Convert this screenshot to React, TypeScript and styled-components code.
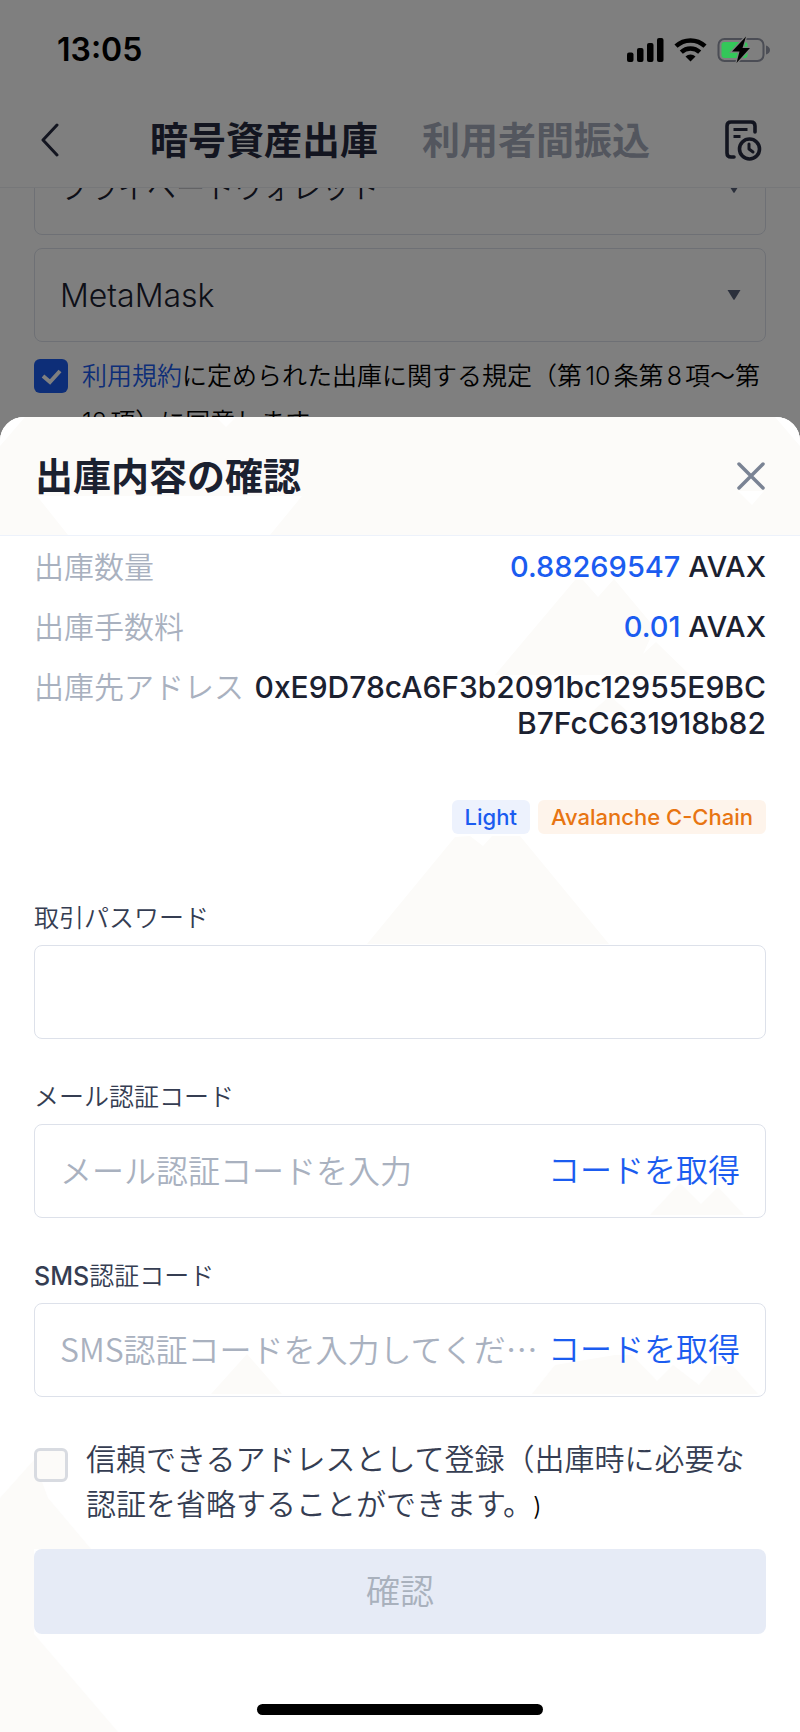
import React from "react";
import styled, { createGlobalStyle } from "styled-components";

const latinFirst = `Inter, "Noto Sans CJK JP", sans-serif`;
const cjkFirst = `"Noto Sans CJK JP", Inter, sans-serif`;

const color = {
  ink: "#1b2130",
  body: "#353d52",
  muted: "#a9b1bf",
  blue: "#1b5cf0",
  line: "#dde1ea",
  tint: "#fcfbf9",
};

const GlobalStyle = createGlobalStyle`
  *, *::before, *::after { box-sizing: border-box; }
  body { margin: 0; background: #fff; font-family: ${latinFirst}; font-weight: 350; color: ${color.ink}; }
  button, input, select { font: inherit; color: inherit; margin: 0; }
  button { border: 0; padding: 0; background: none; cursor: pointer; }
  h1, h2, p, dl, dd { margin: 0; }
  svg { display: block; }
`;

const Screen = styled.div`
  display: grid;
  grid-template-columns: minmax(0, 1fr);
  min-height: 100vh;
`;

const Underlay = styled.div`
  grid-area: 1 / 1;
  background: #fff;
`;

const NavBar = styled.header`
  position: relative;
  z-index: 1;
  display: grid;
  grid-template-columns: 1fr auto 1fr;
  align-items: end;
  height: 188px;
  padding: 0 32px 22px;
  background: #fff;
  border-bottom: 1px solid #eceef2;
`;

const IconButton = styled.button<{ $narrow?: boolean }>`
  display: grid;
  place-items: center;
  width: ${(p) => (p.$narrow ? 36 : 50)}px;
  height: 50px;

  &:last-child {
    justify-self: end;
  }
`;

const NavTabs = styled.nav`
  display: flex;
  gap: 44px;
`;

const NavTab = styled.button<{ $active?: boolean }>`
  font-size: 38px;
  line-height: 50px;
  font-weight: 700;
  white-space: nowrap;
  color: ${(p) => (p.$active ? "#262b40" : "#a6adbd")};
`;

const Scrolled = styled.div`
  display: flex;
  flex-direction: column;
  gap: 13px;
  margin-top: -47px;
  padding: 0 34px;
`;

const SelectBox = styled.div`
  display: grid;
  align-items: center;
  height: 94px;
  border: 1px solid ${color.line};
  border-radius: 8px;
`;

const Select = styled.select<{ $latin?: boolean }>`
  grid-area: 1 / 1;
  width: 100%;
  height: 100%;
  padding: 0 60px 0 25px;
  border: 0;
  background: transparent;
  appearance: none;
  font-size: ${(p) => (p.$latin ? 32 : 29)}px;
`;

const SelectArrow = styled.svg`
  grid-area: 1 / 1;
  justify-self: end;
  margin-right: 24px;
  pointer-events: none;
`;

const CheckRow = styled.div<{ $gap: number }>`
  display: flex;
  align-items: flex-start;
  gap: ${(p) => p.$gap}px;
`;

const CheckBox = styled.input`
  flex: none;
  width: 34px;
  height: 34px;
  margin: 0;
  appearance: none;
  border: 3px solid #d8dbe1;
  border-radius: 6px;
  background: ${color.tint};

  &:checked {
    border: 0;
    background: ${color.blue}
      url("data:image/svg+xml,%3Csvg xmlns='http://www.w3.org/2000/svg' viewBox='0 0 34 34'%3E%3Cpath d='M9 17l7 6 10-11' fill='none' stroke='white' stroke-width='4'/%3E%3C/svg%3E");
  }
`;

const TermsRow = styled(CheckRow)`
  margin-top: -2px;

  ${CheckBox} {
    margin-top: 6px;
  }
`;

const TermsText = styled.label`
  font-size: 25px;
  line-height: 46px;
  text-autospace: normal;
  color: #000;

  a {
    color: ${color.blue};
    text-decoration: none;
  }
`;

const Overlay = styled.div`
  position: relative;
  z-index: 2;
  grid-area: 1 / 1;
  display: flex;
  flex-direction: column;
  justify-content: space-between;
  background: rgba(0, 0, 0, 0.5);
`;

const StatusBar = styled.div`
  display: flex;
  align-items: center;
  justify-content: space-between;
  padding: 30px 30px 0 57px;
  color: #000;
`;

const Clock = styled.time`
  font-size: 32px;
  line-height: 40px;
  font-weight: 600;
`;

const Sheet = styled.section`
  position: relative;
  overflow: hidden;
  border-radius: 24px 24px 0 0;
  background: #fff;
`;

const Watermark = styled.svg`
  position: absolute;
  top: 0;
  left: 0;
  width: 100%;
  pointer-events: none;
`;

const SheetHeader = styled.header`
  position: relative;
  display: flex;
  align-items: center;
  justify-content: space-between;
  height: 119px;
  padding: 0 24px 0 35px;
  border-bottom: 1px solid #edf2fb;
`;

const SheetTitle = styled.h1`
  font-size: 38px;
  line-height: 50px;
  font-weight: 700;
`;

const SheetBody = styled.form`
  position: relative;
  display: flex;
  flex-direction: column;
  padding: 13px 34px 17px;
`;

const Details = styled.dl`
  display: flex;
  flex-direction: column;
  gap: 24px;
`;

const DetailRow = styled.div`
  display: flex;
  justify-content: space-between;
  gap: 8px;
  line-height: 36px;
`;

const DetailName = styled.dt`
  flex: none;
  font-size: 30px;
  color: ${color.muted};
`;

const DetailValue = styled.dd<{ $address?: boolean }>`
  font-size: ${(p) => (p.$address ? 30 : 29)}px;
  font-weight: 500;
  text-align: right;
  overflow-wrap: anywhere;
`;

const Amount = styled.span`
  color: ${color.blue};
`;

const Tags = styled.div`
  display: flex;
  justify-content: flex-end;
  gap: 8px;
  margin: 59px 0 26px;
`;

const Tag = styled.span<{ $tone: "blue" | "orange" }>`
  padding: 0 13px;
  border-radius: 6px;
  font-size: 22px;
  line-height: 34px;
  font-weight: 500;
  color: ${(p) => (p.$tone === "blue" ? color.blue : "#e87512")};
  background: ${(p) => (p.$tone === "blue" ? "#edf2fd" : "#fef4eb")};
`;

const Field = styled.div`
  display: flex;
  flex-direction: column;
  gap: 12px;
  margin-top: 43px;
`;

const FieldLabel = styled.label`
  font-size: 25px;
  line-height: 30px;
  color: ${color.body};
`;

const Strong = styled.span`
  font-weight: 500;
`;

const FieldBox = styled.div`
  display: flex;
  align-items: center;
  gap: 8px;
  height: 94px;
  padding: 0 25px;
  border: 1px solid ${color.line};
  border-radius: 8px;
`;

const Input = styled.input`
  flex: 1;
  min-width: 0;
  height: 60px;
  padding: 0 0 4px;
  border: 0;
  outline: 0;
  background: transparent;
  font-family: ${cjkFirst};
  font-size: 32px;

  &::placeholder {
    color: ${color.muted};
    opacity: 1;
  }
`;

const CodeButton = styled.button`
  flex: none;
  font-size: 32px;
  line-height: 48px;
  color: ${color.blue};
`;

const TrustRow = styled(CheckRow)`
  margin-top: 40px;

  ${CheckBox} {
    margin-top: 11px;
  }
`;

const TrustText = styled.label`
  font-size: 30px;
  line-height: 45px;
  text-spacing-trim: space-all;
  color: ${color.body};
`;

const ClosingMark = styled.span`
  font-size: 25px;
  color: #000;
`;

const SubmitButton = styled.button`
  height: 85px;
  margin-top: 20px;
  padding-bottom: 4px;
  border-radius: 8px;
  background: #e6ebf6;
  font-size: 34px;
  color: #a9b1bd;
`;

const HomeIndicator = styled.div`
  align-self: center;
  width: 286px;
  height: 11px;
  margin-top: 70px;
  border-radius: 6px;
  background: #000;
`;

const StatusIcons = () => (
  <svg width="144" height="28" viewBox="626 35 144 28" aria-label="電波・Wi-Fi・充電中" role="img">
    <g fill="#000">
      <rect x="627" y="51.500" width="6.500" height="9.500" rx="2" />
      <rect x="637" y="47" width="6.500" height="14" rx="2" />
      <rect x="647" y="42" width="6.500" height="19" rx="2" />
      <rect x="657" y="37" width="6.500" height="24" rx="2" />
      <path d="M690.500 60.500l-5-5a7.500 7.500 0 0 1 10 0z" />
    </g>
    <g fill="none" stroke="#000" strokeWidth="4.500">
      <path d="M676 45.200a21 21 0 0 1 29 0" />
      <path d="M681.300 51.200a13.500 13.500 0 0 1 18.400 0" />
    </g>
    <rect x="718.500" y="38" width="45" height="22" rx="6" fill="none" stroke="#4b4d55" strokeWidth="2" />
    <path d="M766 44.500q4 1.500 4 4.500t-4 4.500z" fill="#4b4d55" />
    <rect x="721.500" y="41" width="26" height="16" rx="3" fill="#34c759" />
    <path d="M746 35.500l-14 15h7.500l-3 11.500 13.500-15h-7.500z" fill="#000" stroke="#808080" strokeWidth="2.500" paintOrder="stroke" />
  </svg>
);

const BackIcon = () => (
  <svg width="18" height="34" viewBox="0 0 18 34" fill="none" stroke="#262b40" strokeWidth="3" strokeLinecap="round" strokeLinejoin="round">
    <path d="M16 2L2 17l14 15" />
  </svg>
);

const HistoryIcon = () => (
  <svg width="38" height="42" viewBox="723 119 38 42" fill="none" stroke="#262b40" strokeWidth="3.600" strokeLinecap="round" strokeLinejoin="round">
    <path d="M754 132v-6q0-4-4-4h-20q-4 0-4 4v27q0 4 4 4h3" />
    <path d="M732.500 129.500h14M732.500 136.500h7" strokeLinecap="butt" strokeWidth="3.200" />
    <circle cx="748.500" cy="149" r="10" />
    <path d="M748 144v5l4 3" strokeWidth="3" />
  </svg>
);

const CloseIcon = () => (
  <svg width="28" height="28" viewBox="0 0 28 28" stroke="#7a8394" strokeWidth="3.500" strokeLinecap="round">
    <path d="M2 2l24 24M26 2L2 26" />
  </svg>
);

const ArrowDown = () => (
  <SelectArrow width="14" height="10" viewBox="0 0 14 10" fill="#566079">
    <path d="M.5 0h13L7.800 9.200q-.8 1-1.600 0z" />
  </SelectArrow>
);

const Mountains = () => (
  <Watermark viewBox="0 417 800 1315" aria-hidden="true">
    <g fill={color.tint}>
      <path d="M0 417H800V535H0z" />
      <path d="M495 675L575 580h8l15 17 16-18 41 49-12 26 13-12 34 33z" />
      <path d="M592 712l18-16 18 16z" />
      <path d="M367 944l88-107 15-1 13 10 9-10h28l89 108z" />
      <path d="M650 1215l30-32 21 21 17-17 26 28z" />
      <path d="M211 1394l36-40 35 40z" />
      <path d="M532 1394l23-29 60-10 17 0 25 26 16-16 26 20 16-19h18l25 28z" />
      <path d="M0 1498l34-38 14 38 43 51H34v85l84 98H0z" />
    </g>
    <g fill="#fff">
      <path d="M37 496h265l-32 39H68z" />
      <path d="M0 417h25L0 446zM775 417h25v29z" />
      <path d="M216 417h20l-10 10z" />
      <path d="M738 491h26l-12 14z" />
    </g>
  </Watermark>
);

type CodeFieldProps = { id: string; label: React.ReactNode; placeholder: string };

const CodeField = ({ id, label, placeholder }: CodeFieldProps) => (
  <Field>
    <FieldLabel htmlFor={id}>{label}</FieldLabel>
    <FieldBox>
      <Input id={id} type="text" placeholder={placeholder} />
      <CodeButton type="button">コードを取得</CodeButton>
    </FieldBox>
  </Field>
);

export default function App() {
  return (
    <Screen lang="ja">
      <GlobalStyle />
      <Underlay>
        <NavBar>
          <IconButton $narrow aria-label="戻る">
            <BackIcon />
          </IconButton>
          <NavTabs>
            <NavTab $active>暗号資産出庫</NavTab>
            <NavTab>利用者間振込</NavTab>
          </NavTabs>
          <IconButton aria-label="履歴">
            <HistoryIcon />
          </IconButton>
        </NavBar>
        <Scrolled>
          <SelectBox>
            <Select aria-label="出庫先の種類">
              <option>プライベートウォレット</option>
            </Select>
            <ArrowDown />
          </SelectBox>
          <SelectBox>
            <Select $latin aria-label="ウォレット">
              <option>MetaMask</option>
            </Select>
            <ArrowDown />
          </SelectBox>
          <TermsRow $gap={14}>
            <CheckBox id="terms" type="checkbox" defaultChecked />
            <TermsText htmlFor="terms">
              <a href="#terms">利用規約</a>に定められた出庫に関する規定（第10条第8項～第12項）に同意します
            </TermsText>
          </TermsRow>
        </Scrolled>
      </Underlay>
      <Overlay>
        <StatusBar>
          <Clock>13:05</Clock>
          <StatusIcons />
        </StatusBar>
        <Sheet role="dialog" aria-labelledby="sheet-title">
          <Mountains />
          <SheetHeader>
            <SheetTitle id="sheet-title">出庫内容の確認</SheetTitle>
            <IconButton aria-label="閉じる">
              <CloseIcon />
            </IconButton>
          </SheetHeader>
          <SheetBody>
            <Details>
              <DetailRow>
                <DetailName>出庫数量</DetailName>
                <DetailValue>
                  <Amount>0.88269547</Amount> AVAX
                </DetailValue>
              </DetailRow>
              <DetailRow>
                <DetailName>出庫手数料</DetailName>
                <DetailValue>
                  <Amount>0.01</Amount> AVAX
                </DetailValue>
              </DetailRow>
              <DetailRow>
                <DetailName>出庫先アドレス</DetailName>
                <DetailValue $address>0xE9D78cA6F3b2091bc12955E9BCB7FcC631918b82</DetailValue>
              </DetailRow>
            </Details>
            <Tags>
              <Tag $tone="blue">Light</Tag>
              <Tag $tone="orange">Avalanche C-Chain</Tag>
            </Tags>
            <Field>
              <FieldLabel htmlFor="password">取引パスワード</FieldLabel>
              <FieldBox>
                <Input id="password" type="password" />
              </FieldBox>
            </Field>
            <CodeField id="mail-code" label="メール認証コード" placeholder="メール認証コードを入力" />
            <CodeField
              id="sms-code"
              label={
                <>
                  <Strong>SMS</Strong>認証コード
                </>
              }
              placeholder="SMS認証コードを入力してくだ…"
            />
            <TrustRow $gap={18}>
              <CheckBox id="trust" type="checkbox" />
              <TrustText htmlFor="trust">
                信頼できるアドレスとして登録（出庫時に必要な認証を省略することができます。<ClosingMark>)</ClosingMark>
              </TrustText>
            </TrustRow>
            <SubmitButton type="submit" disabled>
              確認
            </SubmitButton>
            <HomeIndicator />
          </SheetBody>
        </Sheet>
      </Overlay>
    </Screen>
  );
}
